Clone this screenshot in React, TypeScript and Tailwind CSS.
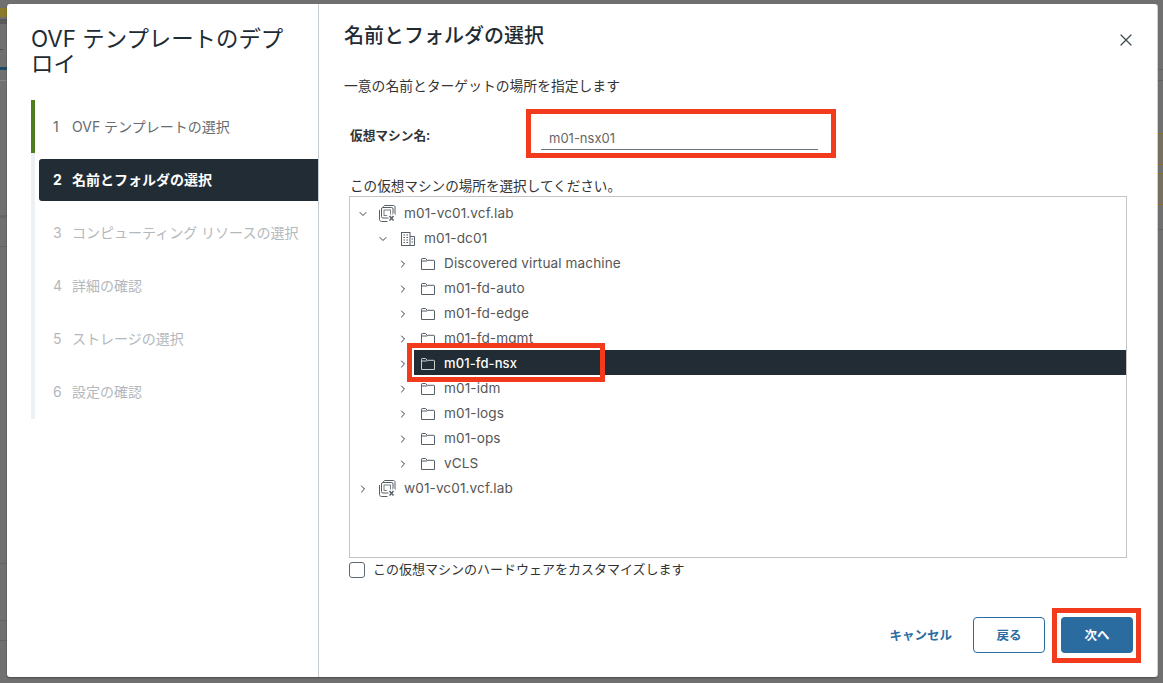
import { ChevronDown, ChevronRight, X } from 'lucide-react'

const font = "font-['Inter','Noto_Sans_CJK_JP',sans-serif]"

const steps = [
  { n: 1, label: 'OVF テンプレートの選択', state: 'done' },
  { n: 2, label: '名前とフォルダの選択', state: 'active' },
  { n: 3, label: 'コンピューティング リソースの選択', state: 'todo' },
  { n: 4, label: '詳細の確認', state: 'todo' },
  { n: 5, label: 'ストレージの選択', state: 'todo' },
  { n: 6, label: '設定の確認', state: 'todo' },
]

const tree = [
  { label: 'm01-vc01.vcf.lab', level: 0, icon: 'vc', open: true },
  { label: 'm01-dc01', level: 1, icon: 'dc', open: true },
  { label: 'Discovered virtual machine', level: 2, icon: 'folder' },
  { label: 'm01-fd-auto', level: 2, icon: 'folder' },
  { label: 'm01-fd-edge', level: 2, icon: 'folder' },
  { label: 'm01-fd-mgmt', level: 2, icon: 'folder' },
  { label: 'm01-fd-nsx', level: 2, icon: 'folder', selected: true },
  { label: 'm01-idm', level: 2, icon: 'folder' },
  { label: 'm01-logs', level: 2, icon: 'folder' },
  { label: 'm01-ops', level: 2, icon: 'folder' },
  { label: 'vCLS', level: 2, icon: 'folder' },
  { label: 'w01-vc01.vcf.lab', level: 0, icon: 'vc' },
]

function FolderIcon() {
  return (
    <svg viewBox="0 0 16 16" className="w-4 h-4 shrink-0" fill="none" stroke="currentColor" strokeWidth="1">
      <path d="M1.5 13.5V3.2c0-.4.3-.7.7-.7h3.4l1.6 1.8h6.6c.4 0 .7.3.7.7v8.5z" strokeLinejoin="round" />
      <path d="M1.5 5h5.7" />
    </svg>
  )
}

function VcIcon() {
  return (
    <svg viewBox="0 0 17 17" className="w-[17px] h-[17px] shrink-0 -ml-[1px]" fill="none" stroke="currentColor" strokeWidth="1">
      <path d="M4.5 2.5V2c0-.8.7-1.500 1.500-1.500h8.500c.8 0 1.500.7 1.500 1.500v8.500" />
      <rect x="2.500" y="2.500" width="11.500" height="10.500" rx="1.500" />
      <rect x="5" y="5" width="6.500" height="5.500" strokeWidth="0.8" />
      <path d="M0.500 5v9.500c0 1 .8 2 2 2h6" />
      <path d="M9 9.500l7 7M16 9.500l-7 7" stroke="white" strokeWidth="3.500" />
      <path d="M10.500 11l4 4.500M14.500 11l-4 4.500" strokeWidth="1.500" />
    </svg>
  )
}

function DcIcon() {
  return (
    <svg viewBox="0 0 16 16" className="w-4 h-4 shrink-0" fill="none" stroke="currentColor" strokeWidth="1">
      <rect x="1.500" y="1.500" width="8.500" height="13" />
      <path d="M10 5.500h4.500v9H10" />
      <path d="M3.500 4h1.500M6.500 4H8M3.500 6.500h1.500M6.500 6.500H8M3.500 9h1.500M6.500 9H8M3.500 11.500h1.500M6.500 11.500H8M11.500 8h1.500M11.500 11h1.500" strokeWidth="1.200" />
    </svg>
  )
}

function TreeRow({ item }: { item: (typeof tree)[number] }) {
  const Chevron = item.open ? ChevronDown : ChevronRight
  return (
    <div className="flex items-center h-[25px]" style={{ paddingLeft: 7 + item.level * 20 }}>
      <Chevron className="w-[12px] h-[12px] mt-[2px] shrink-0 text-[#333f47]" strokeWidth={2} />
      <div
        className={`ml-[5px] flex-1 h-full flex items-center gap-2 pl-[6px] pt-[2px] ${
          item.selected ? 'bg-[#212c35] text-white font-medium' : 'text-[#565656]'
        }`}
      >
        <span className={item.selected ? 'text-[#c9d0d4]' : 'text-[#565f66]'}>
          {item.icon === 'vc' ? <VcIcon /> : item.icon === 'dc' ? <DcIcon /> : <FolderIcon />}
        </span>
        <span className={item.selected ? 'text-[13px] tracking-[0.1px]' : 'text-[13.6px] tracking-[0.1px]'}>{item.label}</span>
      </div>
    </div>
  )
}

export default function App() {
  return (
    <div className={`${font} flex w-[1163px] h-[683px] overflow-hidden bg-[#707070]`}>
      {/* backdrop page showing left of the dialog */}
      <div className="w-[7px] shrink-0 flex flex-col">
        <div className="mt-[8px] h-[9px] bg-[#8a7a2c]" />
        <div className="mt-[2px] h-[5px] bg-[#5a5a5a]" />
        <div className="mt-[25px] w-[3px] h-px bg-[#4d4d4d]" />
        <div className="mt-[17px] h-[3px] bg-[#1d4a66]" />
        <div className="mt-[10px] h-px bg-[#858585]" />
        <div className="mt-[134px] h-[3px] bg-[#666666]" />
        <div className="mt-[28px] h-px bg-[#626262]" />
        <div className="mt-[316px] h-px bg-[#626262]" />
        <div className="mt-[56px] h-px bg-[#626262]" />
        <div className="mt-[19px] h-px bg-[#626262]" />
      </div>

      <div className="relative flex mt-[4px] w-[1150px] h-[673px] shrink-0 bg-white rounded-[3px] shadow-[1px_0_0_#c9cfd3,0_1px_2px_rgba(0,0,0,0.35)]">
        {/* Left — steps */}
        <aside className="w-[312px] shrink-0 border-r border-[#c4ccd1] pl-[24px] pt-[22px]">
          <h1 className="w-[265px] text-[22.4px] leading-[25px] text-[#1f2b33]">OVF テンプレートのデプロイ</h1>
          <ol className="mt-[24px] border-l-[4px] border-[#eef1f4] pb-px">
            {steps.map((s) => (
              <li key={s.n} className={`h-[53px] flex items-center ${s.state === 'done' ? '-ml-[4px] border-l-[4px] border-[#4d7c1c]' : ''}`}>
                <div
                  className={`flex-1 h-[42px] ml-[4px] flex items-center pl-[14px] text-[14px] rounded-l-[3px] ${
                    s.state === 'active'
                      ? 'bg-[#212c35] text-white font-bold'
                      : s.state === 'done'
                        ? 'text-[#666c70]'
                        : 'text-[#b3b8bc]'
                  }`}
                >
                  <span className="w-[19px]">{s.n}</span>
                  <span>{s.label}</span>
                </div>
              </li>
            ))}
          </ol>
        </aside>

        {/* Right — form */}
        <main className="relative flex-1 pl-[25px] pr-[24px] pt-[18px]">
          <div className="h-[28px] flex justify-between">
            <h2 className="text-[20px] leading-[28px] font-medium text-[#1f2b33]">名前とフォルダの選択</h2>
            <X className="w-[20px] h-[20px] mt-[8px] mr-[-3px] text-[#3c4a54]" strokeWidth={1.5} />
          </div>

          <p className="mt-[26px] h-[20px] leading-[20px] text-[13.8px] text-[#333]">一意の名前とターゲットの場所を指定します</p>

          <div className="mt-[24px] h-[30px] ml-[6px] flex">
            <label className="w-[191px] pt-[6px] leading-[20px] text-[12.7px] font-bold text-[#333]">仮想マシン名:</label>
            <div className="w-[277px] border-b border-[#6a7680] pl-[8px] leading-[36px] text-[13px] text-[#666]">m01-nsx01</div>
          </div>

          <p className="mt-[26px] ml-[6px] h-[20px] leading-[20px] text-[13.6px] text-[#333]">この仮想マシンの場所を選択してください。</p>

          <div className="ml-[5px] mr-[6px] h-[362px] border border-[#c4c4c4] pt-[3px]">
            {tree.map((item) => (
              <TreeRow key={item.label} item={item} />
            ))}
          </div>

          <label className="mt-[3px] ml-[5px] h-[17px] flex items-center gap-[8px] text-[13px] text-[#333]">
            <span className="w-[16px] h-[16px] rounded-[3px] border border-[#5d6a73] bg-white" />
            この仮想マシンのハードウェアをカスタマイズします
          </label>

          <div className="mt-[39px] flex justify-end items-center">
            <button className="pt-[2px] text-[12.5px] font-bold text-[#2a6ca0] mr-[21px]">キャンセル</button>
            <button className="w-[72px] h-[36px] pt-[2px] rounded-[4px] border border-[#2a6ca0] text-[12.5px] font-bold text-[#2a6ca0] mr-[16px]">戻る</button>
            <button className="w-[72px] h-[36px] pt-[2px] rounded-[4px] bg-[#2a6ca0] text-[12.5px] font-bold text-white">次へ</button>
          </div>

          {/* red annotations from the screenshot */}
          <div className="absolute left-[207px] top-[105px] w-[310px] h-[49px] border-[5px] border-[#f13b1c]" />
          <div className="absolute left-[88px] top-[339px] w-[198px] h-[39px] border-[5px] border-[#f13b1c]" />
          <div className="absolute left-[733px] top-[604px] w-[89px] h-[55px] border-[5px] border-[#f13b1c]" />
        </main>
      </div>

      {/* backdrop page showing right of the dialog */}
      <div className="flex-1 flex flex-col">
        <div className="mt-[69px] h-px bg-[#626262]" />
        <div className="mt-[10px] h-px bg-[#626262]" />
        <div className="mt-[52px] h-[32px] bg-[#75705f] border-y border-[#8f6f1c]" />
        <div className="mt-[8px] h-[32px] bg-[#75705f] border-y border-[#8f6f1c]" />
        <div className="mt-[24px] h-px bg-[#626262]" />
      </div>
    </div>
  )
}
